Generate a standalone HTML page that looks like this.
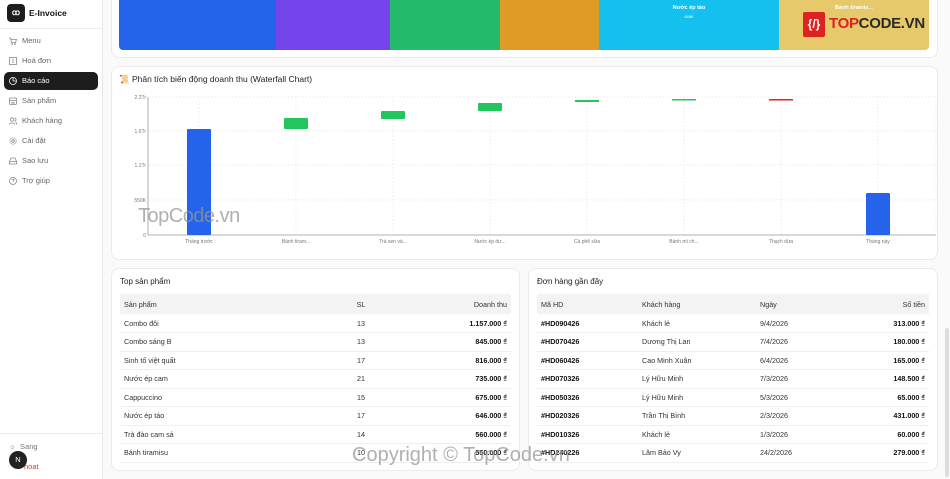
<!DOCTYPE html>
<html><head><meta charset="utf-8"><style>
*{box-sizing:border-box;margin:0;padding:0}
body{width:950px;height:479px;overflow:hidden;background:#fafafa;font-family:"Liberation Sans",sans-serif;color:#222;position:relative;font-size:8px}
.abs{position:absolute}
.side{left:0;top:0;width:103px;height:479px;background:#fff;border-right:1px solid #e6e6e6}
.nav{position:absolute;left:4px;width:94px;height:18px;border-radius:5px;font-size:7.5px;color:#666;padding-left:18px;line-height:18px}
.nav svg{position:absolute;left:5px;top:5px}
.nav.act{background:#1d1d1f;color:#fff}
.card{background:#fff;border:1px solid #ebebeb;border-radius:8px}
table{border-collapse:collapse;width:100%;font-size:7.2px;table-layout:fixed}
th{background:#f3f3f3;font-weight:normal;height:20px;text-align:left;padding:0 4px;color:#333}
td{height:18.5px;border-bottom:1px solid #eee;padding:0 4px;color:#333}
.r{text-align:right}.c{text-align:center}.b{font-weight:bold;color:#111}
</style></head><body>
<div class="abs side">
 <div class="abs" style="left:7px;top:4px;width:18px;height:18px;background:#1d1d1f;border-radius:4px;color:#fff;font-size:8px;font-weight:bold;text-align:center;line-height:18px">ꝏ</div>
 <div class="abs" style="left:29px;top:8px;font-size:8.5px;font-weight:bold;color:#111">E-Invoice</div>
 <div class="abs" style="left:0;top:28px;width:102px;border-top:1px solid #ececec"></div>
 <div class="nav" style="top:32px"><svg width="8" height="8" viewBox="0 0 8 8" fill="none" stroke="#888" stroke-width=".8"><path d="M0 1h1.5l1 4.5h4l1-3H2"/><circle cx="3" cy="7" r=".5"/><circle cx="6" cy="7" r=".5"/></svg>Menu</div>
 <div class="nav" style="top:52px"><svg width="8" height="8" viewBox="0 0 8 8" fill="none" stroke="#888" stroke-width=".8"><rect x=".5" y=".5" width="7" height="7"/><path d="M4 2v4"/></svg>Hoá đơn</div>
 <div class="nav act" style="top:72px"><svg width="8" height="8" viewBox="0 0 8 8" fill="none" stroke="#fff" stroke-width=".8"><circle cx="4" cy="4" r="3.5"/><path d="M4 .5V4h3.5"/></svg>Báo cáo</div>
 <div class="nav" style="top:92px"><svg width="8" height="8" viewBox="0 0 8 8" fill="none" stroke="#888" stroke-width=".8"><rect x=".5" y="1" width="7" height="6.5" rx="1"/><path d="M.5 3.5h7M3 7.5v-2h2v2"/></svg>Sản phẩm</div>
 <div class="nav" style="top:112px"><svg width="8" height="8" viewBox="0 0 8 8" fill="none" stroke="#888" stroke-width=".8"><circle cx="3" cy="2.5" r="1.7"/><path d="M.5 7.5c0-2 5-2 5 0M5.5 1a1.5 1.5 0 010 3M6.5 5c1 .5 1 1.5 1 2.5"/></svg>Khách hàng</div>
 <div class="nav" style="top:132px"><svg width="8" height="8" viewBox="0 0 8 8" fill="none" stroke="#888" stroke-width=".8"><circle cx="4" cy="4" r="1.3"/><circle cx="4" cy="4" r="3.2" stroke-dasharray="1.2 .8"/></svg>Cài đặt</div>
 <div class="nav" style="top:152px"><svg width="8" height="8" viewBox="0 0 8 8" fill="none" stroke="#888" stroke-width=".8"><path d="M.5 4.5l1.5-3.5h4l1.5 3.5v2.5h-7z M.5 4.5h7"/></svg>Sao lưu</div>
 <div class="nav" style="top:172px"><svg width="8" height="8" viewBox="0 0 8 8" fill="none" stroke="#888" stroke-width=".8"><circle cx="4" cy="4" r="3.5"/><path d="M3 3a1 1 0 112 .3c-.5.5-1 .5-1 1.3M4 5.8v.3"/></svg>Trợ giúp</div>
 <div class="abs" style="left:0;top:433px;width:102px;border-top:1px solid #ececec"></div>
 <div class="abs" style="left:9px;top:442px;font-size:7.5px;color:#777">☼ &nbsp;Sang</div>
 <div class="abs" style="left:24px;top:462px;font-size:7.5px;color:#d33">hoat</div>
 <div class="abs" style="left:9px;top:451px;width:18px;height:18px;border-radius:50%;background:#222;color:#fff;font-size:7.5px;text-align:center;line-height:18px">N</div>
</div>

<div class="abs card" style="left:111px;top:-10px;width:827px;height:68px"></div>
<div class="abs" style="left:119px;top:0;width:810px;height:50px;border-radius:0 0 4px 4px;overflow:hidden;display:flex">
 <div style="width:157px;background:#2563eb"></div>
 <div style="width:114px;background:#7544ea"></div>
 <div style="width:110px;background:#23bb6b"></div>
 <div style="width:99px;background:#e09a26"></div>
 <div style="width:180px;background:#14c0ee;color:#fff;text-align:center;font-size:5.5px;font-weight:bold;padding-top:5px">Nước ép táo<div style="font-size:4px;font-weight:normal;margin-top:3px">646K</div></div>
 <div style="width:150px;background:#e6c96a;color:#fff;text-align:center;font-size:5.5px;font-weight:bold;padding-top:5px">Bánh tiramis...</div>
</div>
<div class="abs" style="left:803px;top:12px;width:22px;height:25px;background:#d22;border-radius:2px;color:#fff;font-weight:bold;font-size:12px;text-align:center;line-height:25px">{/}</div>
<div class="abs" style="left:829px;top:15px;font-size:15px;font-weight:bold;color:#2a2a2a;letter-spacing:-0.3px"><span style="color:#d22">TOP</span>CODE.VN</div>

<div class="abs card" style="left:111px;top:66px;width:827px;height:194px"></div>
<div class="abs" style="left:119px;top:74px;font-size:8.5px;color:#222">📜 Phân tích biến động doanh thu (Waterfall Chart)</div>
<svg class="abs" style="left:111px;top:85px" width="827" height="170">
 <g stroke="#e5e5e5" stroke-dasharray="1.5 2" stroke-width=".7">
  <path d="M37 12H825M37 46H825M37 80H825M37 115H825"/>
  <path d="M88 12V150M185 12V150M282 12V150M379 12V150M476 12V150M573 12V150M670 12V150M767 12V150M825 12V150"/>
 </g>
 <path d="M37 12V150H825" stroke="#999" stroke-width=".8" fill="none"/>
 <g font-size="5" fill="#777" text-anchor="end" font-family="Liberation Sans">
  <text x="35" y="14">2.2Tr</text><text x="35" y="48">1.6Tr</text><text x="35" y="82">1.1Tr</text><text x="35" y="117">550K</text><text x="35" y="152">0</text>
 </g>
 <g font-size="5" fill="#777" text-anchor="middle" font-family="Liberation Sans">
  <text x="88" y="158">Tháng trước</text><text x="185" y="158">Bánh tiram...</text><text x="282" y="158">Trà sen và...</text><text x="379" y="158">Nước ép dư...</text><text x="476" y="158">Cà phê sữa</text><text x="573" y="158">Bánh mì ch...</text><text x="670" y="158">Thạch dừa</text><text x="767" y="158">Tháng này</text>
 </g>
 <rect x="76" y="44" width="24" height="106" rx="1" fill="#2563eb"/>
 <rect x="173" y="33" width="24" height="11" rx="1" fill="#22c55e"/>
 <rect x="270" y="26" width="24" height="8" rx="1" fill="#22c55e"/>
 <rect x="367" y="18" width="24" height="8" rx="1" fill="#22c55e"/>
 <rect x="464" y="15" width="24" height="2" fill="#22c55e"/>
 <rect x="561" y="14" width="24" height="1.5" fill="#22c55e"/>
 <rect x="658" y="14" width="24" height="1.5" fill="#dc2626"/>
 <rect x="755" y="108" width="24" height="42" rx="1" fill="#2563eb"/>
</svg>

<div class="abs card" style="left:111px;top:268px;width:409px;height:203px;padding:8px 8px 0 8px">
 <div style="font-size:8px;margin-bottom:8px;color:#222">Top sản phẩm</div>
 <table><tr><th style="width:201px">Sản phẩm</th><th class="c" style="width:80px">SL</th><th class="r">Doanh thu</th></tr>
 <tr><td>Combo đôi</td><td class="c">13</td><td class="r b">1.157.000 ₫</td></tr>
 <tr><td>Combo sáng B</td><td class="c">13</td><td class="r b">845.000 ₫</td></tr>
 <tr><td>Sinh tố việt quất</td><td class="c">17</td><td class="r b">816.000 ₫</td></tr>
 <tr><td>Nước ép cam</td><td class="c">21</td><td class="r b">735.000 ₫</td></tr>
 <tr><td>Cappuccino</td><td class="c">15</td><td class="r b">675.000 ₫</td></tr>
 <tr><td>Nước ép táo</td><td class="c">17</td><td class="r b">646.000 ₫</td></tr>
 <tr><td>Trà đào cam sả</td><td class="c">14</td><td class="r b">560.000 ₫</td></tr>
 <tr><td>Bánh tiramisu</td><td class="c">10</td><td class="r b">550.000 ₫</td></tr></table>
</div>
<div class="abs card" style="left:528px;top:268px;width:410px;height:203px;padding:8px 8px 0 8px">
 <div style="font-size:8px;margin-bottom:8px;color:#222">Đơn hàng gần đây</div>
 <table><tr><th style="width:101px">Mã HD</th><th style="width:118px">Khách hàng</th><th>Ngày</th><th class="r">Số tiền</th></tr>
 <tr><td class="b">#HD090426</td><td>Khách lẻ</td><td>9/4/2026</td><td class="r b">313.000 ₫</td></tr>
 <tr><td class="b">#HD070426</td><td>Dương Thị Lan</td><td>7/4/2026</td><td class="r b">180.000 ₫</td></tr>
 <tr><td class="b">#HD060426</td><td>Cao Minh Xuân</td><td>6/4/2026</td><td class="r b">165.000 ₫</td></tr>
 <tr><td class="b">#HD070326</td><td>Lý Hữu Minh</td><td>7/3/2026</td><td class="r b">148.500 ₫</td></tr>
 <tr><td class="b">#HD050326</td><td>Lý Hữu Minh</td><td>5/3/2026</td><td class="r b">65.000 ₫</td></tr>
 <tr><td class="b">#HD020326</td><td>Trần Thị Bình</td><td>2/3/2026</td><td class="r b">431.000 ₫</td></tr>
 <tr><td class="b">#HD010326</td><td>Khách lẻ</td><td>1/3/2026</td><td class="r b">60.000 ₫</td></tr>
 <tr><td class="b">#HD240226</td><td>Lâm Bảo Vy</td><td>24/2/2026</td><td class="r b">279.000 ₫</td></tr></table>
</div>
<div class="abs" style="left:945px;top:328px;width:4px;height:149px;background:#ddd;border-radius:2px"></div>
<div class="abs" style="left:138px;top:205px;font-size:20px;color:rgba(150,150,150,.75);letter-spacing:-0.5px">TopCode.vn</div>
<div class="abs" style="left:352px;top:444px;font-size:20px;color:rgba(150,150,150,.75)">Copyright © TopCode.vn</div>
</body></html>
